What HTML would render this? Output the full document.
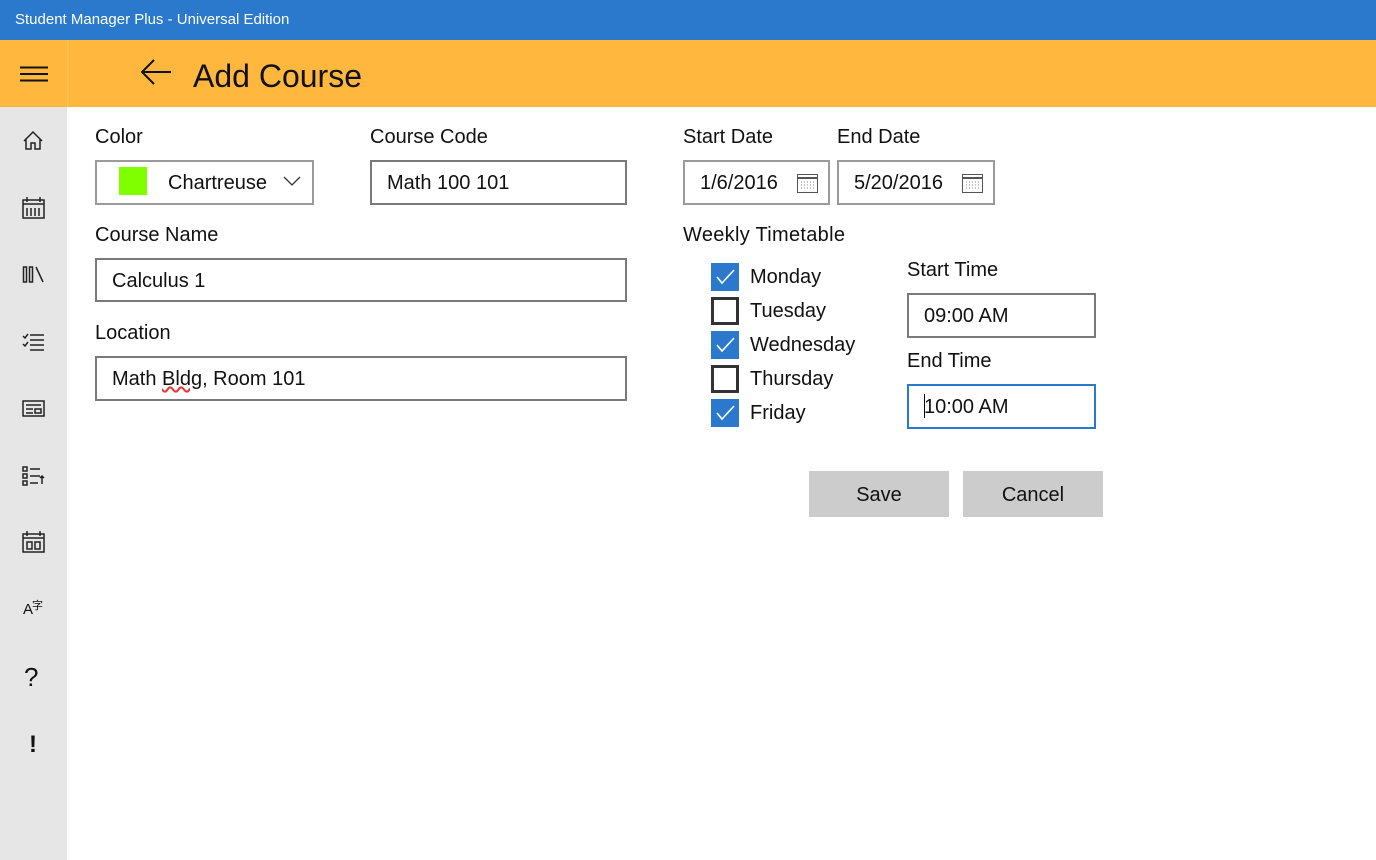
<!DOCTYPE html>
<html><head><meta charset="utf-8"><style>
*{margin:0;padding:0;box-sizing:border-box}
body{width:1376px;height:860px;position:relative;overflow:hidden;background:#fff;font-family:"Liberation Sans",sans-serif;color:#111}
.a{position:absolute}
.lbl{position:absolute;font-size:20px;line-height:24px;white-space:nowrap}
.box{position:absolute;border:2px solid #7a7a7a;font-size:20px;line-height:42px;padding-left:15px;white-space:nowrap}
.lb{border-color:#9a9a9a}
.cb{position:absolute;left:711px;width:28px;height:28px}
.cb.on{background:#2a79cc}
.cb.off{border:3px solid #333}
.btn{position:absolute;background:#ccc;font-size:20px;text-align:center;line-height:48px;width:140px;height:46px;top:471px}
</style></head><body>
<div class="a" style="left:0;top:0;width:1376px;height:40px;background:#2b79cc;color:#fff;font-size:15px;line-height:40px;padding-left:15px">Student Manager Plus - Universal Edition</div>
<div class="a" style="left:0;top:40px;width:1376px;height:67px;background:#ffb83d"></div>
<div class="a" style="left:67px;top:40px;width:1px;height:67px;background:#ffc866"></div>
<svg class="a" style="left:20px;top:66px" width="28" height="16"><path d="M0 1.5H28M0 8H28M0 14.5H28" stroke="#111" stroke-width="2"/></svg>
<svg class="a" style="left:141px;top:59px" width="32" height="26"><path d="M13 1L1 13L13 25M1 13H30" stroke="#111" stroke-width="2" fill="none"/></svg>
<div class="lbl" style="left:193px;top:57px;font-size:32px;line-height:38px">Add Course</div>
<div class="a" style="left:0;top:107px;width:67px;height:753px;background:#e6e6e6"></div>
<svg class="a" style="left:0;top:107px" width="67" height="660" fill="none" stroke="#222" stroke-width="1.5">
<path d="M24 34L33 25L42 34M26 32V42H31V36H35V42H40V32"/>
<rect x="23" y="93" width="21" height="18"/><path d="M23 97H44M27 90V95M40 90V95M27 101V109M31 101V109M35 101V109M39 101V109"/>
<path d="M23.5 160h3v15h-3zM29.5 160h3v15h-3zM36 160L43 175"/>
<path d="M23 229L25 231L28 227M23 237L25 239L28 235M30 228H44M30 233H44M30 238H44M30 243H44"/>
<rect x="23" y="294" width="21" height="15"/><path d="M26 298H41M26 302H33M26 306H33M35 302H41V306H35Z"/>
<path d="M23 360h4v4h-4zM23 367h4v4h-4zM23 374h4v4h-4zM30 362H40M30 369H40M30 376H38M42 377V369M40 371L42 369L44 371"/>
<rect x="23" y="427" width="21" height="18"/><path d="M23 431H44M27 424V429M40 424V429M27 435H32V442H27ZM35 435H40V442H35Z"/>
</svg>
<div class="lbl" style="left:23px;top:598px;font-size:15px">A</div>
<div class="lbl" style="left:32px;top:593px;font-size:11px;font-family:'Noto Sans CJK SC',sans-serif">字</div>
<div class="lbl" style="left:24px;top:662px;font-size:26px;line-height:30px">?</div>
<div class="lbl" style="left:29px;top:731px;font-size:24px;line-height:28px;font-weight:bold">!</div>

<div class="lbl" style="left:95px;top:125px">Color</div>
<div class="box lb" style="left:95px;top:160px;width:219px;height:45px;padding-left:71px">Chartreuse</div>
<div class="a" style="left:119px;top:167px;width:28px;height:28px;background:#80ff00"></div>
<svg class="a" style="left:283px;top:176px" width="18" height="10"><path d="M1 1L9 9L17 1" stroke="#333" stroke-width="1.3" fill="none"/></svg>
<div class="lbl" style="left:370px;top:125px">Course Code</div>
<div class="box" style="left:370px;top:160px;width:257px;height:45px">Math 100 101</div>
<div class="lbl" style="left:95px;top:223px">Course Name</div>
<div class="box" style="left:95px;top:258px;width:532px;height:44px">Calculus 1</div>
<div class="lbl" style="left:95px;top:321px">Location</div>
<div class="box" style="left:95px;top:356px;width:532px;height:45px">Math <span style="text-decoration:underline wavy #e33">Bldg</span>, Room 101</div>

<div class="lbl" style="left:683px;top:125px">Start Date</div>
<div class="lbl" style="left:837px;top:125px">End Date</div>
<div class="box lb" style="left:683px;top:160px;width:147px;height:45px">1/6/2016</div>
<div class="box lb" style="left:837px;top:160px;width:158px;height:45px">5/20/2016</div>
<svg class="a" style="left:796px;top:171px" width="24" height="24"><rect x="1.5" y="3.5" width="20" height="18" fill="none" stroke="#555"/><path d="M1.5 7H21.5" stroke="#555" stroke-width="2"/><path d="M5 11H19M5 14H19M5 17H19" stroke="#888" stroke-dasharray="1 2"/></svg>
<svg class="a" style="left:961px;top:171px" width="24" height="24"><rect x="1.5" y="3.5" width="20" height="18" fill="none" stroke="#555"/><path d="M1.5 7H21.5" stroke="#555" stroke-width="2"/><path d="M5 11H19M5 14H19M5 17H19" stroke="#888" stroke-dasharray="1 2"/></svg>

<div class="lbl" style="left:683px;top:223px;letter-spacing:0.3px">Weekly Timetable</div>
<div class="cb on" style="top:263px"></div>
<div class="cb off" style="top:297px"></div>
<div class="cb on" style="top:331px"></div>
<div class="cb off" style="top:365px"></div>
<div class="cb on" style="top:399px"></div>
<svg class="a" style="left:711px;top:263px" width="28" height="170" fill="none" stroke="#fff" stroke-width="1.6"><path d="M6 14L11 20L23 7"/><path d="M6 82L11 88L23 75"/><path d="M6 150L11 156L23 143"/></svg>
<div class="lbl" style="left:750px;top:265px">Monday</div>
<div class="lbl" style="left:750px;top:299px">Tuesday</div>
<div class="lbl" style="left:750px;top:333px">Wednesday</div>
<div class="lbl" style="left:750px;top:367px">Thursday</div>
<div class="lbl" style="left:750px;top:401px">Friday</div>

<div class="lbl" style="left:907px;top:258px">Start Time</div>
<div class="box" style="left:907px;top:293px;width:189px;height:45px">09:00 AM</div>
<div class="lbl" style="left:907px;top:349px">End Time</div>
<div class="box" style="left:907px;top:384px;width:189px;height:45px;border-color:#2a79cc">10:00 AM</div>
<div class="a" style="left:924px;top:394px;width:1px;height:24px;background:#000"></div>

<div class="btn" style="left:809px">Save</div>
<div class="btn" style="left:963px">Cancel</div>
</body></html>
